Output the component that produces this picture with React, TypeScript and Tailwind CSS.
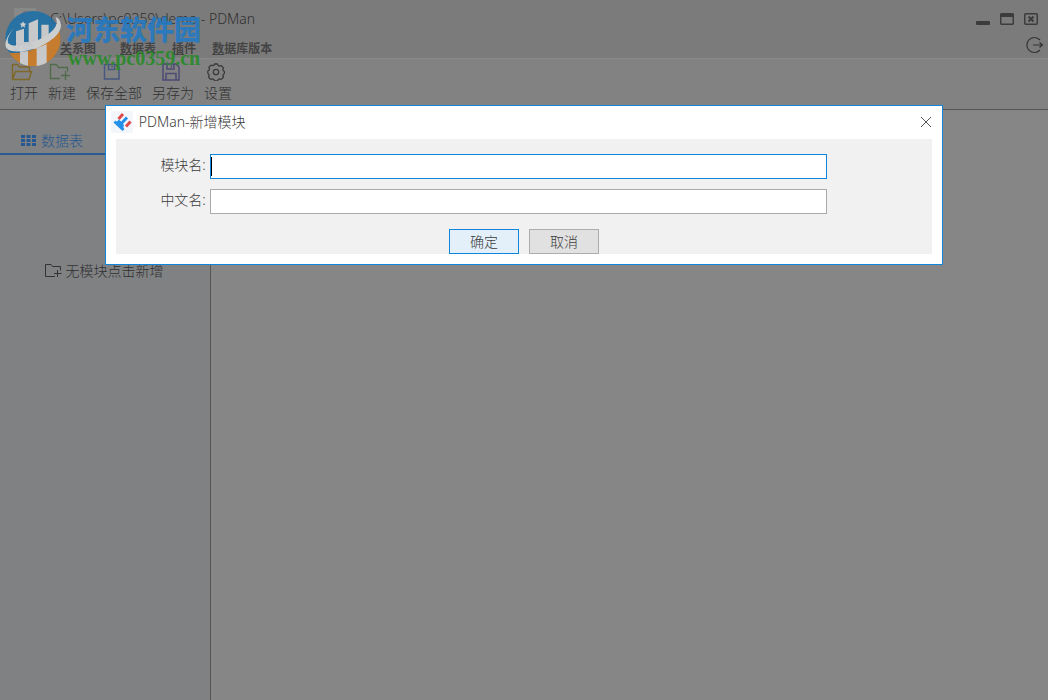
import { ReactNode } from "react";

type TMenu = { label: string; className?: string };
type TTool = { label: string; icon: ReactNode };

// first character of each menu is its alt-key hint
const menus: TMenu[] = [
  { label: "文件", className: "mr-2.5 text-[#2d4a68]" },
  { label: "关系图", className: "mr-2" },
  { label: "数据表" },
  { label: "插件" },
  { label: "数据库版本" }
];

const tools: TTool[] = [
  {
    label: "打开",
    icon: (
      <svg viewBox="0 0 22 18" className="h-[18px] w-[22px] fill-none stroke-[#80682a]" strokeWidth="1.5">
        <path d="M1.5 16.5V1.5h5l2 2.5h10v4M1.5 16.5l3-8h16l-2.5 8z" strokeLinejoin="round" />
      </svg>
    )
  },
  {
    label: "新建",
    icon: (
      <svg viewBox="0 0 22 18" className="h-[18px] w-[22px] fill-none stroke-[#4f6b49]" strokeWidth="1.3">
        <path d="M11 15.5H1.500v-14h6l2 3h9v4M16.500 8v9M12 12.500h9" />
      </svg>
    )
  },
  {
    label: "保存全部",
    icon: (
      <svg viewBox="0 0 18 18" className="h-[18px] w-[18px] fill-none stroke-[#465781]" strokeWidth="1.5">
        <path d="M1.5 1.5h11L16 5v11H1.500zM5.500 1.500v5h6v-5M9 3v1.500" />
      </svg>
    )
  },
  {
    label: "另存为",
    icon: (
      <svg viewBox="0 0 18 18" className="h-[18px] w-[18px] fill-none stroke-[#4c4b74]" strokeWidth="1.5">
        <path d="M1 1h13l3 3v13H1zM5 1v5h7V1M4 17v-6.500h10V17M9.500 2.500v2" />
      </svg>
    )
  },
  {
    label: "设置",
    icon: (
      <svg viewBox="0 0 18 18" className="h-[18px] w-[18px] fill-none stroke-[#3b3b3b]" strokeWidth="1.3">
        <path
          d="M7.500 1h3l.8 1.700 1.200.5 1.800-.6 2.100 2.100-.6 1.800.5 1.200 1.200.8v2l-1.200.8-.5 1.200.6 1.800-2.100 2.100-1.800-.6-1.200.5-.8 1.700h-3l-.8-1.700-1.200-.5-1.800.6-2.100-2.100.6-1.800-.5-1.200L.8 10V8l1.200-.8L2.500 6 1.900 4.200 4 2.100l1.800.6L7 2.200z"
          strokeLinejoin="round"
        />
        <circle cx="9" cy="9" r="2.700" />
      </svg>
    )
  }
];

const AppLogo = () => (
  <svg viewBox="0 0 22 22" className="h-[22px] w-[22px] shrink-0">
    <rect width="22" height="22" rx="1" fill="#f3f7fb" />
    <g strokeWidth="3" fill="none">
      <path d="M7.500 8l4.500-5M15 15.500l4.500-5" stroke="#dd4a4c" />
      <path d="M3.500 10.500L12.500 19M5.500 13.500l3.500-4M8.500 14.500L16 6.500" stroke="#2390ea" />
    </g>
    <path d="M5 11l4-1 4 4-1 4z" fill="#2390ea" />
  </svg>
);

const Watermark = () => (
  <div className="pointer-events-none absolute left-1 top-2 flex items-start opacity-90">
    <svg viewBox="0 0 180 180" className="h-[60px] w-[60px] shrink-0">
      <clipPath id="disc">
        <circle cx="87" cy="92" r="83" />
      </clipPath>
      <g clipPath="url(#disc)">
        <rect width="180" height="180" fill="#1f70a8" />
        <path d="M0 132Q90 150 175 62V180H0z" fill="#cf7d26" />
        <path d="M36 70l24-8v40h14V46l28-12v62h10V50h22v50l-34 22H36z" fill="#d0d1d2" />
        <path d="M48 130h24v50H48zM98 122l30-14v70H98z" fill="#d0d1d2" />
      </g>
      <path
        d="M30 60C10 82-2 108 8 121c12 16 65 12 110-11 40-20 57-43 52-66-3-10-9-15-16-17 12 20-2 44-40 63-38 20-82 29-98 18-10-7-3-27 14-48z"
        fill="#d6d7d8"
      />
      <path d="M57 40l3 6 7 1-5 5 1 7-6-4-6 4 1-7-5-5 7-1z" fill="#d6d7d8" />
    </svg>
    <div className="whitespace-nowrap pt-1">
      <div className="pl-0.5 text-[27px] font-black leading-9 text-[#2479c2]">河东软件园</div>
      <div className="pl-1 font-['Liberation_Serif',serif] text-xl leading-5 font-bold text-[#288a28]">www.pc0359.cn</div>
    </div>
  </div>
);

const WindowButtons = () => (
  <div className="flex gap-2.5 pr-2.5 text-[#3c3c3c]">
    <button aria-label="minimize">
      <svg viewBox="0 0 14 14" className="h-3.5 w-3.5 fill-current">
        <rect y="9" width="14" height="4" rx="1" />
      </svg>
    </button>
    <button aria-label="maximize">
      <svg viewBox="0 0 14 14" className="h-3.5 w-3.5 fill-current">
        <path fillRule="evenodd" d="M1 1h12l1 1v10l-1 1H1l-1-1V2zM1.500 5v6.500h11V5z" />
      </svg>
    </button>
    <button aria-label="close">
      <svg viewBox="0 0 14 14" className="h-3.5 w-3.5 fill-none stroke-current">
        <rect x=".75" y="1.75" width="12.5" height="10.5" rx="1" strokeWidth="1.5" />
        <path d="M4.500 4.500l5 5M9.500 4.500l-5 5" strokeWidth="2" />
      </svg>
    </button>
  </div>
);

const ModuleDialog = () => (
  <div className="absolute inset-x-0 top-[105px] flex justify-center">
    <div role="dialog" aria-labelledby="dialog-title" className="w-4/5 border border-[#0f85de] bg-white text-[#3c3c3c]">
      <div className="flex h-[33px] items-center pb-0.5 pl-[5px] pr-2.5">
        <AppLogo />
        <h2 id="dialog-title" className="flex-1 pl-1.5">
          PDMan-新增模块
        </h2>
        <button aria-label="关闭">
          <svg viewBox="0 0 12 12" className="h-3 w-3 fill-none stroke-[#555]">
            <path d="M1 1l10 10M11 1L1 11" />
          </svg>
        </button>
      </div>
      <form className="mx-2.5 mb-2.5 bg-[#f1f1f1] pt-[15px]">
        <div className="mb-2.5 flex h-[25px] pr-[105px]">
          <label htmlFor="module" className="w-[94px] pr-1 text-right leading-[22px]">
            模块名:
          </label>
          <div className="relative flex-1">
            <input id="module" className="block h-full w-full border border-[#0f85de] bg-white px-1 outline-none" />
            <span className="absolute left-px top-[3px] h-[19px] w-px bg-black" />
          </div>
        </div>
        <div className="mb-[15px] flex h-[25px] pr-[105px]">
          <label htmlFor="chnname" className="w-[94px] pr-1 text-right leading-[22px]">
            中文名:
          </label>
          <input id="chnname" className="flex-1 border border-[#aaa] bg-white px-1 outline-none" />
        </div>
        <div className="flex justify-center gap-2.5">
          <button type="button" className="h-[25px] w-[70px] border border-[#0f85de] bg-[#e3f0fa]">
            确定
          </button>
          <button type="button" className="h-[25px] w-[70px] border border-[#adadad] bg-[#e1e1e1]">
            取消
          </button>
        </div>
      </form>
    </div>
  </div>
);

const App = () => {
  return (
    <div className="relative flex min-h-screen flex-col bg-[#868686] font-['Noto_Sans','Noto_Sans_CJK_SC',sans-serif] text-sm font-light text-[#303030]">
      <header className="border-b border-[#8a8a8a] bg-[#7b7b7b]">
        <div className="flex h-[38px] items-center pl-3.5">
          <div className="opacity-10">
            <AppLogo />
          </div>
          <h1 className="flex-1 pl-3.5">C:\Users\pc0359\demo - PDMan</h1>
          <WindowButtons />
        </div>
        <div className="flex h-5 items-center pl-2.5 pr-1">
          <nav className="flex flex-1 gap-4 pt-0.5 text-xs font-bold text-[#444]">
            {menus.map(menu => (
              <button key={menu.label} className={menu.className}>
                <span className="underline">{menu.label[0]}</span>
                {menu.label.slice(1)}
              </button>
            ))}
          </nav>
          <button aria-label="exit" className="-mt-1.5">
            <svg viewBox="0 0 18 18" className="h-[18px] w-[18px] fill-none stroke-[#333]" strokeWidth="1.2">
              <path d="M14 4a7.500 7.500 0 1 0 0 10M7 9h9.500M13.500 6.500L16.500 9l-3 2.500" />
            </svg>
          </button>
        </div>
      </header>
      <div className="flex h-[51px] gap-2.5 border-b border-[#555] bg-[#828282] pl-2.5 pt-1">
        {tools.map(tool => (
          <button key={tool.label} className="flex flex-col items-center leading-6">
            <span className="flex pr-1">{tool.icon}</span>
            <span>{tool.label}</span>
          </button>
        ))}
      </div>
      <div className="flex flex-1">
        <aside className="w-[211px] border-r border-[#555] bg-[#7f8183]">
          <button className="mt-[18px] flex h-[27px] w-1/2 items-center gap-[5px] border-b-2 border-[#2a5c92] pl-[21px] text-[#27588f]">
            <svg viewBox="0 0 15 11" className="h-[11px] w-[15px] fill-current">
              <path d="M0 0h4v3H0zM5.500 0h4v3h-4zM11 0h4v3h-4zM0 4h4v3H0zM5.500 4h4v3h-4zM11 4h4v3h-4zM0 8h4v3H0zM5.500 8h4v3h-4zM11 8h4v3h-4z" />
            </svg>
            数据表
          </button>
          <button className="mt-[106px] flex w-full items-center justify-center gap-1 pr-0.5">
            <svg viewBox="0 0 17 14" className="h-3.5 w-[17px] fill-none stroke-[#333]">
              <path d="M10 12.500H.5V.5H6l1.500 2h8v4M12.500 6v7M9 9.500h7.500" />
            </svg>
            无模块点击新增
          </button>
        </aside>
        <main className="flex-1" />
      </div>
      <Watermark />
      <ModuleDialog />
    </div>
  );
};

export default App;
